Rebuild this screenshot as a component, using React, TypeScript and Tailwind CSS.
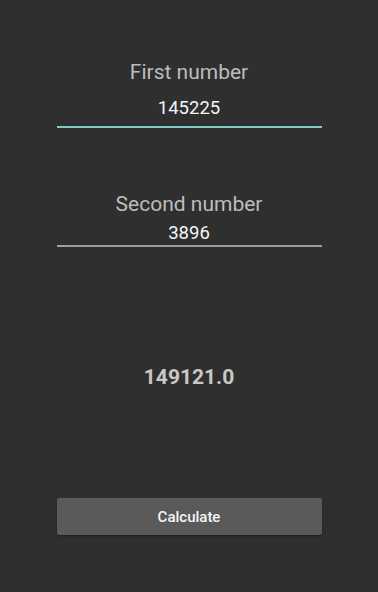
export default function App() {
  return (
    <div
      className="flex min-h-[592px] w-full flex-col items-center bg-[#2f2f2f] pt-[60px]"
      style={{ fontFamily: "Roboto, 'Liberation Sans', sans-serif" }}
    >
      <div className="w-[265px]">
        <p className="text-center text-[21px] leading-[24px] text-[#bdbdbd]">First number</p>
        <p className="mt-[14px] text-center text-[18.5px] leading-[20px] text-[#f5f5f5]">145225</p>
        <div className="mt-[8px] h-[2px] bg-[#80cbc4]" />
      </div>

      <div className="mt-[64px] w-[265px]">
        <p className="text-center text-[21px] leading-[24px] text-[#bdbdbd]">Second number</p>
        <p className="mt-[7px] text-center text-[18.5px] leading-[20px] text-[#f5f5f5]">3896</p>
        <div className="mt-[2px] h-[1.5px] bg-[#9e9e9e]" />
      </div>

      <p className="mt-[118px] text-center text-[21px] font-bold leading-[24px] text-[#c8c8c8]">149121.0</p>

      <button className="mt-[109px] h-[37px] w-[265px] rounded-[2px] bg-[#5a5a5a] pt-[2px] text-[15px] font-medium text-[#f5f5f5] shadow-[0_1px_2px_rgba(0,0,0,0.4)]">
        Calculate
      </button>
    </div>
  )
}
